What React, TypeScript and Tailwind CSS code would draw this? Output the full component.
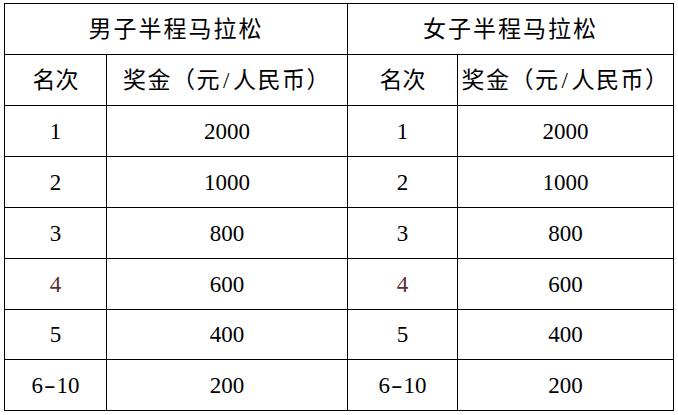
import React from "react";

type Row = { rank: React.ReactNode; key: string; prize: string; h: string; tint?: boolean };

const rows: Row[] = [
  { key: "1", rank: "1", prize: "2000", h: "h-[50px]" },
  { key: "2", rank: "2", prize: "1000", h: "h-[50px]" },
  { key: "3", rank: "3", prize: "800", h: "h-[50px]" },
  { key: "4", rank: "4", prize: "600", h: "h-[50px]", tint: true },
  { key: "5", rank: "5", prize: "400", h: "h-[49px]" },
  {
    key: "6-10",
    rank: (
      <>
        6<span className="mx-[3px] inline-block scale-x-150">-</span>10
      </>
    ),
    prize: "200",
    h: "h-[50px]",
  },
];

const Cell = ({ children, className = "" }: { children: React.ReactNode; className?: string }) => (
  <div className={`flex items-center justify-center bg-white ${className}`}>{children}</div>
);

const PrizeHead = () => (
  <Cell className="h-[50px] tracking-[1.5px]">
    奖金（元<span className="mx-[2px]">/</span>人民币）
  </Cell>
);

export default function App() {
  return (
    <div className="min-h-[415px] bg-white pl-[4px] pt-[3px] font-['Liberation_Serif','Noto_Sans_CJK_SC',serif] text-[23px] leading-none text-black">
      <div className="grid w-[670px] grid-cols-[101px_240px_109px_215px] gap-px bg-black p-px">
        <Cell className="col-span-2 h-[50px] tracking-[2px]">男子半程马拉松</Cell>
        <Cell className="col-span-2 h-[50px] tracking-[2px]">女子半程马拉松</Cell>
        <Cell className="h-[50px]">名次</Cell>
        <PrizeHead />
        <Cell className="h-[50px]">名次</Cell>
        <PrizeHead />
        {rows.map((r) => (
          <React.Fragment key={r.key}>
            <Cell className={`${r.h} ${r.tint ? "text-[#5a2f2f]" : ""}`}>{r.rank}</Cell>
            <Cell className={r.h}>{r.prize}</Cell>
            <Cell className={`${r.h} ${r.tint ? "text-[#5a2f2f]" : ""}`}>{r.rank}</Cell>
            <Cell className={r.h}>{r.prize}</Cell>
          </React.Fragment>
        ))}
      </div>
    </div>
  );
}
